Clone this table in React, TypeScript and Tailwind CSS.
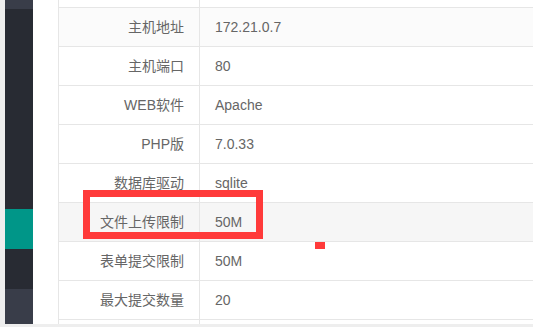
const rows = [
  { label: "主机地址", value: "172.21.0.7", bg: "bg-[#fbfbfb]" },
  { label: "主机端口", value: "80", bg: "bg-white" },
  { label: "WEB软件", value: "Apache", bg: "bg-white" },
  { label: "PHP版", value: "7.0.33", bg: "bg-white" },
  { label: "数据库驱动", value: "sqlite", bg: "bg-white" },
  { label: "文件上传限制", value: "50M", bg: "bg-[#f6f6f6]" },
  { label: "表单提交限制", value: "50M", bg: "bg-white" },
  { label: "最大提交数量", value: "20", bg: "bg-white" },
];

const Sidebar = () => (
  <div className="flex w-[28px] flex-col">
    <div className="h-[9px] bg-[#393d49]" />
    <div className="h-[200px] bg-[#282b33]" />
    <div className="h-[40px] bg-[#009688]" />
    <div className="h-[40px] bg-[#282b33]" />
    <div className="flex-1 bg-[#393d49]" />
  </div>
);

const App = () => {
  return (
    <div
      className="relative flex h-[327px] w-[533px] flex-col overflow-hidden bg-[#eeeeee] text-[14px] text-[#666]"
      style={{ fontFamily: '"Liberation Sans", "Noto Sans CJK SC", sans-serif' }}
    >
      <div className="flex h-[324px] min-h-0">
        <div className="w-[5px]" />
        <Sidebar />
        <div className="flex-1 bg-white pl-[25px]">
          <div className="flex h-full flex-col border-l border-[#e6e6e6]">
            <div className="flex h-[8px] border-b border-[#e6e6e6]">
              <div className="w-[141px] border-r border-[#e6e6e6]" />
            </div>
            {rows.map((row) => (
              <div key={row.label} className={`flex h-[39px] border-b border-[#e6e6e6] ${row.bg}`}>
                <div className="flex w-[141px] items-center justify-end border-r border-[#e6e6e6] pr-[15px]">
                  {row.label}
                </div>
                <div className="flex flex-1 items-center pl-[15px]">{row.value}</div>
              </div>
            ))}
            <div className="flex flex-1">
              <div className="w-[141px] border-r border-[#e6e6e6]" />
            </div>
          </div>
        </div>
      </div>
      <div className="h-[3px]" />

      {/* highlight marker around the upload limit row */}
      <div className="absolute left-[83px] top-[190px] h-[49px] w-[180px] border-[7px] border-[#ff3a3a]" />
      <div className="absolute left-[315px] top-[242px] h-[7px] w-[10px] bg-[#ff3a3a]" />
    </div>
  );
};

export default App;
